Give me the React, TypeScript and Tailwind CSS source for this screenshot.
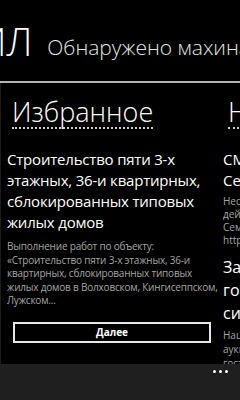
import React from "react";

export default function App() {
  const font = { fontFamily: "'Open Sans', 'Noto Sans', sans-serif" };
  return (
    <div
      className="relative w-[240px] h-[400px] bg-black text-white overflow-hidden"
      style={font}
    >
      {/* Panorama title */}
      <div className="h-[81px] flex items-end pb-[22px] whitespace-nowrap overflow-hidden">
        <span className="text-[38px] leading-[36px] ml-[-21px] font-light">ИЛ</span>
        <span className="text-[21px] leading-[24px] ml-[15px] font-light text-[#e6e6e6]">
          Обнаружено махинаций
        </span>
      </div>
      <div className="h-[2px] bg-[#b4b4b4]" />

      {/* Panorama items */}
      <div className="flex">
        {/* Column 1 */}
        <div className="w-[216px] shrink-0 border-l border-[#1c1c1c]">
          <div className="pl-[11px] pt-[14px]">
            <span className="inline-block text-[27px] leading-[30px] font-light border-b-2 border-dotted border-[#cfcfcf] pb-[0px]">
              Избранное
            </span>
          </div>
          <div className="pl-[6px] pr-[4px] mt-[20px]">
            <div className="text-[15px] leading-[21px] tracking-[-0.2px] text-white">
              Строительство пяти 3-х этажных, 36-и квартирных, сблокированных типовых жилых домов
            </div>
            <div className="mt-[7px] text-[10px] leading-[13.5px] text-[#a6a6a6] tracking-[-0.2px]">
              <div>Выполнение работ по объекту:</div>
              <div>«Строительство пяти 3-х этажных, 36-и</div>
              <div>квартирных, сблокированных типовых</div>
              <div className="whitespace-nowrap">жилых домов в Волховском, Кингисеппском,</div>
              <div>Лужском...</div>
            </div>
          </div>
          <div className="ml-[12px] mt-[14px] w-[198px] h-[21px] border-2 border-[#e8e8e8] flex items-center justify-center text-[10px] font-bold">
            Далее
          </div>
        </div>

        {/* Column 2 */}
        <div className="w-[200px] shrink-0 whitespace-nowrap">
          <div className="pl-[12px] pt-[14px]">
            <span className="inline-block text-[27px] leading-[30px] font-light border-b-2 border-dotted border-[#cfcfcf] pb-[0px]">
              Новости
            </span>
          </div>
          <div className="pl-[7px] mt-[20px]">
            <div className="text-[15px] leading-[21px]">
              <div>СМИ сообщили о нарушениях</div>
              <div>Севастополе при закупках</div>
            </div>
            <div className="mt-[4px] text-[10px] leading-[13px] text-[#a6a6a6]">
              <div>Несколько уголовных дел возбуждено</div>
              <div>действующих лиц</div>
              <div>Семь лет назад</div>
              <div>http://example.ru</div>
            </div>
            <div className="mt-[9px] text-[16px] leading-[23px]">
              <div>Закупки</div>
              <div>госкорпораций</div>
              <div>сильно выросли</div>
            </div>
            <div className="mt-[3px] text-[10px] leading-[14px] text-[#a6a6a6]">
              <div>Национальные</div>
              <div>аукционы</div>
              <div>госзаказ</div>
            </div>
          </div>
        </div>
      </div>

      {/* Application bar */}
      <div className="absolute left-0 bottom-0 w-full h-[36px] bg-[#1f1f1f]">
        <div className="absolute right-[12px] top-[6px] flex gap-[3px]">
          <span className="w-[3px] h-[3px] rounded-full bg-white" />
          <span className="w-[3px] h-[3px] rounded-full bg-white" />
          <span className="w-[3px] h-[3px] rounded-full bg-white" />
        </div>
      </div>
    </div>
  );
}
